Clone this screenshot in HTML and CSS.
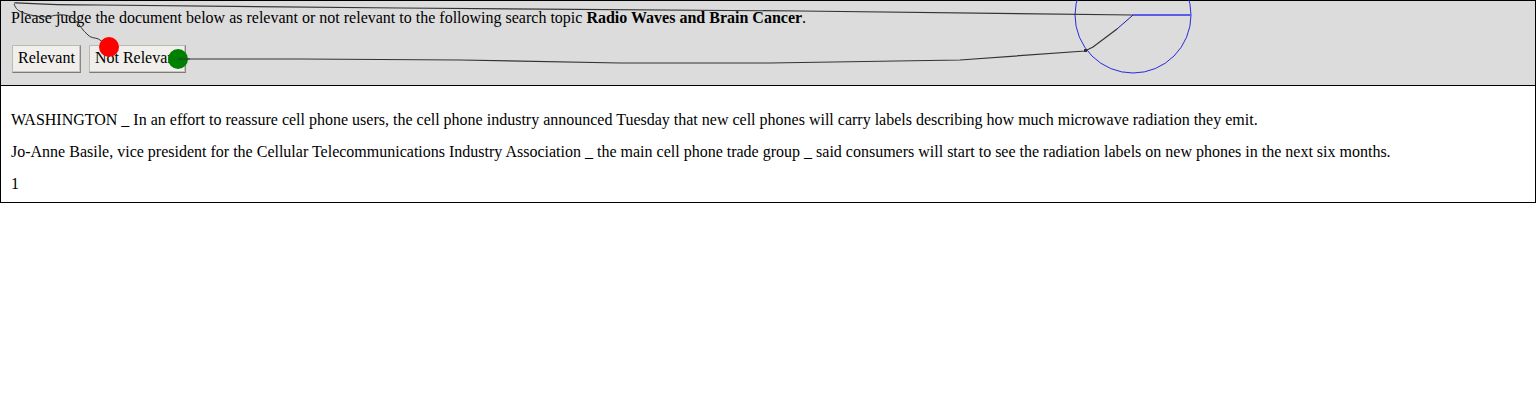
FILE: index.html
```html
<!DOCTYPE html>
<html>
<head>
<meta charset="utf-8">
<link rel="stylesheet" href="styles.css">
</head>
<body>
<div class="frame">
  <div class="task">
    <p class="prompt">Please judge the document below as relevant or not relevant to the following search topic <b>Radio Waves and Brain Cancer</b>.</p>
    <div class="actions">
      <button class="btn">Relevant</button>
      <button class="btn">Not Relevant</button>
    </div>
  </div>
  <div class="doc">
    <p>WASHINGTON _ In an effort to reassure cell phone users, the cell phone industry announced Tuesday that new cell phones will carry labels describing how much microwave radiation they emit.</p>
    <p>Jo-Anne Basile, vice president for the Cellular Telecommunications Industry Association _ the main cell phone trade group _ said consumers will start to see the radiation labels on new phones in the next six months.</p>
    <div class="page-no">1</div>
  </div>
</div>
<svg class="trace" width="1536" height="400" viewBox="0 0 1536 400">
  <circle cx="1133" cy="15" r="58" fill="none" stroke="#2a2ae0" stroke-width="1"/>
  <line x1="1133" y1="15" x2="1191" y2="15" stroke="#5c5ce8" stroke-width="2"/>
  <path d="M14 3 C 16 2, 30 5, 100 5 L 400 8 L 800 11 L 1133 15" fill="none" stroke="#333" stroke-width="1.2"/>
  <path d="M14 4 C 16 9, 18 11, 24 13 C 32 16, 44 18, 52 16 C 60 14, 68 14, 74 19 C 80 25, 83 31, 88 35 C 92 39, 96 37, 100 40 L 109 47" fill="none" stroke="#333" stroke-width="1"/>
  <path d="M178 59 L 300 59 L 460 60 L 620 63 L 770 63 L 960 60 L 1085 51 L 1093 47 L 1117 29" fill="none" stroke="#333" stroke-width="1.2"/>
  <path d="M1117 29 L 1133 15" fill="none" stroke="#1a1aa0" stroke-width="1"/>
  <rect x="1084" y="49" width="3" height="3" fill="#333"/>
  <circle cx="109" cy="47" r="10" fill="#ff0000"/>
  <circle cx="178" cy="59" r="10" fill="#008000"/>
  <line x1="178" y1="59" x2="190" y2="59" stroke="#333" stroke-width="1"/>
</svg>
</body>
</html>
```

FILE: styles.css
```css
html, body {
  margin: 0;
  padding: 0;
  background: #fff;
}
body {
  font-family: "Liberation Serif", "Times New Roman", serif;
  font-size: 16px;
  color: #000;
  position: relative;
}
.frame {
  border: 1px solid #000;
}
.task {
  background: #dcdcdc;
  border-bottom: 1px solid #000;
  padding: 8px 10px 12px 10px;
  height: 64px;
}
.prompt {
  margin: 0;
  line-height: 18px;
}
.actions {
  display: flex;
  gap: 8px;
  margin-top: 18px;
  padding-left: 1px;
}
.btn {
  font-family: "Liberation Serif", "Times New Roman", serif;
  font-size: 16px;
  color: #000;
  background: #f1efec;
  border: 1px solid #bdbab5;
  border-right-color: #8a8783;
  border-bottom-color: #7d7a76;
  box-shadow: inset -1px -1px 0 #c9c6c1;
  height: 28px;
  padding: 0 5px 2px 5px;
  line-height: 24px;
  margin: 0;
}
.doc {
  background: #fff;
  padding: 10px 10px 10px 10px;
}
.doc p {
  margin: 16px 0;
  line-height: 16px;
}
.page-no {
  line-height: 16px;
}
.trace {
  position: absolute;
  left: 0;
  top: 0;
  pointer-events: none;
}
```
